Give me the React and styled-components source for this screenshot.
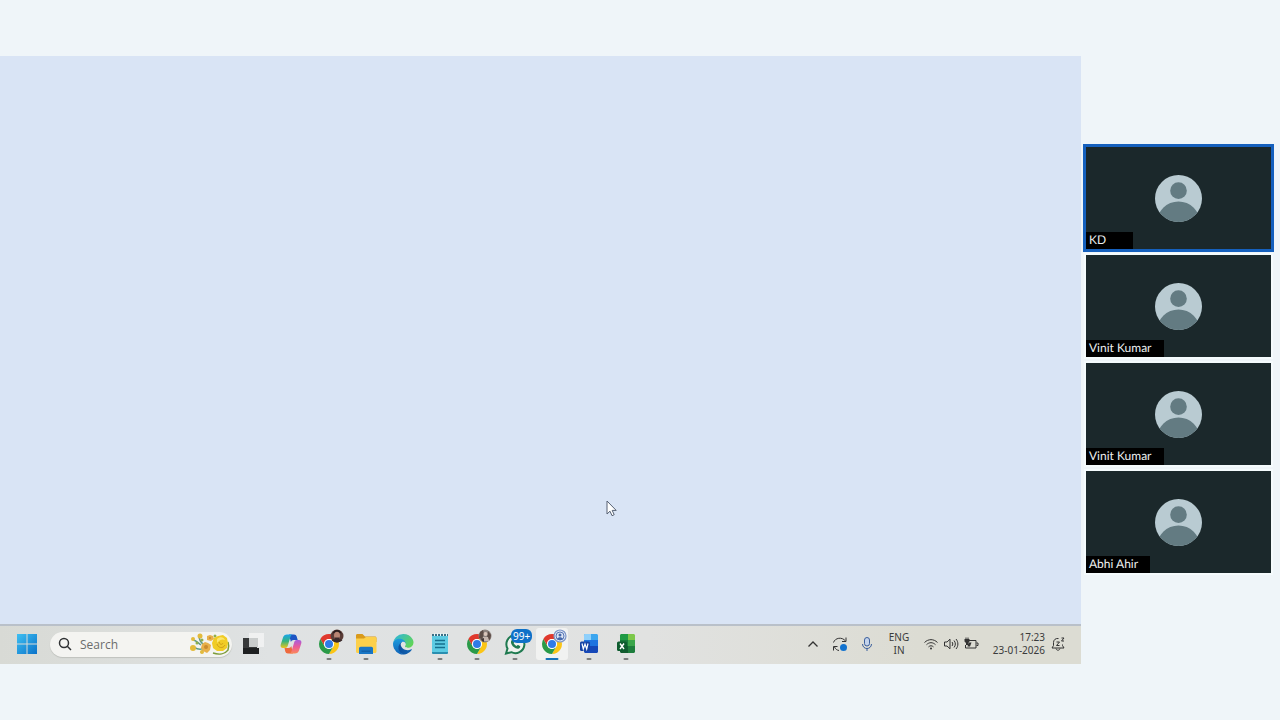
import React from 'react';
import styled, {createGlobalStyle} from 'styled-components';


const people = [
    {id: 1, name: 'KD', speaking: true},
    {id: 2, name: 'Vinit Kumar'},
    {id: 3, name: 'Vinit Kumar'},
    {id: 4, name: 'Abhi Ahir'},
];

const GlobalStyle = createGlobalStyle`
    * {
        box-sizing: border-box;
    }
    body {
        margin: 0;
        background-color: #eff5f9;
        font-family: "Noto Sans", "Open Sans", sans-serif;
    }
    button {
        border: none;
        padding: 0;
        background: none;
        font-family: inherit;
        color: inherit;
        cursor: pointer;
    }
`

const Container = styled.div`
    display: flex;
    align-items: center;
    min-height: 100vh;
`
const Screen = styled.main`
    display: flex;
    flex-direction: column;
    flex: 1;
    min-width: 0;
    aspect-ratio: 16 / 9;
    background-color: #d9e4f5;
`
const Desktop = styled.div`
    position: relative;
    flex: 1;
`
const Cursor = styled.svg`
    position: absolute;
    left: 56%;
    top: 78%;
    width: 14px;
    height: 20px;
`
const Bar = styled.footer`
    display: flex;
    align-items: center;
    height: 40px;
    padding: 0 15px 0 9px;
    color: #3a3b3b;
    background: linear-gradient(to right, #d8dad5, #dfe2e3 25%, #e1e2e1 60%, #dcdcd3 85%);
    box-shadow: inset 0 2px 0 #b9c0c9;
`
const Icon = styled.svg`
    display: block;
    flex: none;
    width: 32px;
    height: 32px;
    border-radius: 3px;
`
const StartButton = styled.button`
    display: flex;
    justify-content: center;
    width: 36px;
`
const SearchBox = styled.div`
    display: flex;
    align-items: center;
    width: 182px;
    height: 25px;
    margin: 0 2px 0 5px;
    padding: 0 1px 0 7px;
    border-radius: 13px;
    background-color: #f4f4f1;
    box-shadow: 0 1px 1px #bfc1bd;
`
const SearchIcon = styled.svg`
    flex: none;
    width: 16px;
    height: 16px;
    fill: none;
    stroke: #303234;
    stroke-width: 1.5;
`
const SearchInput = styled.input`
    flex: 1;
    min-width: 0;
    padding: 0 0 0 7px;
    border: none;
    outline: none;
    background: none;
    font-family: "Open Sans", "Noto Sans", sans-serif;
    font-size: 12px;
    &::placeholder{
        color: #6b6c6c;
        opacity: 1;
    }
`
const Flowers = styled.svg`
    flex: none;
    width: 42px;
    height: 24px;
`
const AppButton = styled.button`
    position: relative;
    display: flex;
    justify-content: center;
    width: ${({$wide}) => $wide ? '38px' : '37px'};
    ${Icon}{
        background-color: ${({$active}) => $active ? '#f1f2f1' : 'transparent'};
    }
    &::after{
        content: "";
        display: ${({$open}) => $open ? 'block' : 'none'};
        position: absolute;
        bottom: 0;
        left: 50%;
        transform: translateX(-50%);
        width: ${({$active}) => $active ? '13px' : '5px'};
        height: 2px;
        border-radius: 1px;
        background-color: ${({$active}) => $active ? '#1673b8' : '#7b7d7d'};
    }
`
const Count = styled.span`
    position: absolute;
    top: 1px;
    left: 15px;
    padding: 0 2px;
    border-radius: 6px;
    background-color: #0f71c8;
    color: #fff;
    font-size: 10px;
    line-height: 14px;
`
const Tray = styled.div`
    display: flex;
    align-items: center;
    margin-left: auto;
`
const TrayIcon = styled.svg`
    flex: none;
    width: 16px;
    height: 16px;
    fill: none;
    stroke: ${({$color}) => $color || '#333'};
    stroke-width: 1;
`
const TrayButton = styled.button`
    display: flex;
    justify-content: center;
    width: 27px;
`
const LangButton = styled.button`
    display: flex;
    flex-direction: column;
    align-items: center;
    width: 36px;
    margin: 0 4px 0 1px;
    font-size: 10px;
    line-height: 13px;
`
const StatusButton = styled.button`
    display: flex;
    gap: 4px;
    padding: 0 2px;
`
const ClockButton = styled.button`
    display: flex;
    flex-direction: column;
    align-items: flex-end;
    width: 64px;
    font-size: 10px;
    line-height: 13px;
`
const BellButton = styled.button`
    display: flex;
    margin-left: 5px;
`
const People = styled.aside`
    display: flex;
    flex-direction: column;
    gap: 6px;
    width: 199px;
    padding: 0 9px 0 5px;
`
const TileBox = styled.div`
    position: relative;
    display: flex;
    align-items: center;
    justify-content: center;
    height: 102px;
    background-color: #1b282b;
    box-shadow: 0 0 0 ${({$speaking}) => $speaking ? '3px #1560bd' : '2px #f5fbfd'};
    z-index: ${({$speaking}) => $speaking ? 1 : 0};
`
const Avatar = styled.svg`
    width: 47px;
    height: 47px;
`
const Name = styled.span`
    position: absolute;
    left: 0;
    bottom: 0;
    min-width: 47px;
    padding: 0 12px 1px 3px;
    background-color: #000;
    color: #eef0f0;
    font-family: Lato, "Noto Sans", sans-serif;
    font-size: 12px;
    line-height: 16px;
    text-rendering: geometricPrecision;
`

// every app icon is drawn on a 32x32 board with its centre at 16,16
const StartIcon = () => (
    <Icon viewBox="0 0 32 32">
        <defs>
            <linearGradient id="win" x1="0" y1="0" x2="1" y2="1">
                <stop offset="0" stopColor="#3fc0f2"/>
                <stop offset="1" stopColor="#0a72c9"/>
            </linearGradient>
        </defs>
        <path fill="url(#win)" d="M6 6h9.500v9.500H6zM16.500 6H26v9.500h-9.500zM6 16.500h9.500V26H6zM16.500 16.500H26V26h-9.500z"/>
    </Icon>
);

const FlowersIcon = () => (
    <Flowers viewBox="0 0 42 24">
        <g fill="none" stroke="#5f9a86" strokeWidth="1.5">
            <path d="M5 15c4 3 9 3 13-1M10 5c1 5 4 8 8 10M4 8c3 0 5 3 8 5M12 21c2-3 3-5 6-6"/>
            <path d="M24 21c6 2 12 1 15-3 1-3 1-5 0-8" stroke="#7d9c3a"/>
        </g>
        <g fill="#e3bb3c">
            <circle cx="4" cy="7" r="2"/>
            <circle cx="11" cy="4" r="2.5"/>
            <circle cx="4" cy="16" r="3"/>
            <circle cx="13" cy="20" r="2"/>
        </g>
        <g fill="#8fae4b">
            <circle cx="8" cy="11" r="1.5"/>
            <circle cx="13" cy="8" r="1.5"/>
            <circle cx="26" cy="4" r="1.5"/>
        </g>
        <path fill="#e8b04a" d="M18 4l3-1 3 1 1 3-3 2-4-1zM13 12l3-2 3 1 3 2-1 5-3 3-4-2-2-3z"/>
        <circle cx="17" cy="15" r="2" fill="#c98a2d"/>
        <circle cx="21" cy="6" r="1" fill="#c98a2d"/>
        <path fill="#f0cc25" d="M25 6l4-2 5-1 4 3 1 5-1 5-4 3-6 0-4-3-1-5z"/>
        <path fill="#fbe670" d="M28 7c3-3 7-2 8 1-2-1-5-1-8 3z"/>
        <path fill="none" stroke="#cf9f18" d="M28 12c1 4 6 5 8 1M30 10c1 3 3 3 4 1"/>
    </Flowers>
);

const TaskViewIcon = () => (
    <Icon viewBox="0 0 32 32">
        <path fill="#37393a" d="M6 10h14v16H6z"/>
        <path fill="#1e2021" d="M6 20h16v6H6z"/>
        <path fill="#f2f3f3" fillOpacity=".9" d="M12 5h15v14H12z"/>
        <path fill="#c9cccc" d="M12 10h9v9h-9z"/>
    </Icon>
);

const CopilotIcon = () => (
    <Icon viewBox="0 0 32 32">
        <defs>
            <linearGradient id="copA" x1="0" y1="0" x2="0" y2="1">
                <stop offset="0" stopColor="#19a5ea"/>
                <stop offset=".5" stopColor="#35b47d"/>
                <stop offset="1" stopColor="#f1c51b"/>
            </linearGradient>
            <linearGradient id="copB" x1="0" y1="0" x2="0" y2="1">
                <stop offset="0" stopColor="#a45de0"/>
                <stop offset=".5" stopColor="#ea5a9a"/>
                <stop offset="1" stopColor="#fb8a5a"/>
            </linearGradient>
        </defs>
        <path fill="#1c55c4" d="M14 6.500h5c1.500 0 2.300.8 2.700 2l1 3.500h-4c-1.500 0-2.400.7-2.800 2z"/>
        <path fill="#ee6a3e" d="M18 25.500h-5c-1.500 0-2.300-.8-2.700-2L9.500 20h4c1.500 0 2.400-.7 2.800-2z"/>
        <path fill="url(#copA)" d="M12 6.500h6c-1.500.2-2.200 1.200-2.600 2.600l-2.700 9c-.4 1.300-1.200 2-2.600 2H8c-2 0-2.800-1.500-2.300-3.300l2.300-7.300c.6-2 2-3 4-3z"/>
        <path fill="url(#copB)" d="M20 25.500h-6c1.500-.2 2.200-1.200 2.600-2.600l2.700-9c.4-1.300 1.200-2 2.600-2H24c2 0 2.800 1.500 2.300 3.300L24 22.500c-.6 2-2 3-4 3z"/>
    </Icon>
);

const ChromeIcon = ({children}) => (
    <Icon viewBox="0 0 32 32">
        <g transform="translate(16 16)">
            <path fill="#e0392d" d="M-8.660-5A10 10 0 0 1 8.660-5H0A5 5 0 0 0-4.330 2.500Z"/>
            <path fill="#fbc516" transform="rotate(120)" d="M-8.660-5A10 10 0 0 1 8.660-5H0A5 5 0 0 0-4.330 2.500Z"/>
            <path fill="#2a9a48" transform="rotate(240)" d="M-8.660-5A10 10 0 0 1 8.660-5H0A5 5 0 0 0-4.330 2.500Z"/>
            <circle r="5" fill="#fff"/>
            <circle r="4" fill="#2f7be6"/>
        </g>
        {children}
    </Icon>
);

const ManBadge = () => (
    <g>
        <circle cx="24" cy="8" r="6.5" fill="#5b3d38"/>
        <path fill="#2a1d1d" d="M19.500 7c0-3.500 2-5 4.500-5s4.500 1.500 4.500 5l-1-2h-7z"/>
        <ellipse cx="24" cy="7.5" rx="3" ry="3.8" fill="#b98573"/>
        <path fill="#3a2a2c" d="M21.500 9.500h5l-1 2.500h-3zM18.500 12c2-1.500 9-1.500 11 0-2.500 3.300-8.500 3.300-11 0z"/>
    </g>
);

const PhotoBadge = () => (
    <g>
        <circle cx="24" cy="8" r="6.5" fill="#8d837f"/>
        <path fill="#5c4c46" d="M19 4l3-2 1 4-2 5-3-1zM27 3l3 4-1 5-3-2z"/>
        <circle cx="24.5" cy="6" r="2" fill="#d9c5ba"/>
        <path fill="#c6b6ae" d="M22 9h5l1 4h-6z"/>
        <path fill="#433836" d="M20 11l3-1v4l-2-1z"/>
    </g>
);

const ProfileBadge = () => (
    <g>
        <circle cx="24" cy="8" r="6" fill="#dbe4f4" stroke="#7c95c8" strokeWidth="1.2"/>
        <circle cx="24" cy="8" r="4" fill="none" stroke="#5877b6"/>
        <circle cx="24" cy="7" r="1.5" fill="#4668ab"/>
        <path fill="#4668ab" d="M21 11c1-2.500 5-2.500 6 0-1.500 1.300-4.500 1.300-6 0z"/>
    </g>
);

const FolderIcon = () => (
    <Icon viewBox="0 0 32 32">
        <path fill="#d99a1c" d="M6 7.500C6 6.700 6.500 6 7.500 6h5l2.500 2.500h10c.8 0 1.500.6 1.500 1.500v4H6z"/>
        <path fill="#fcd04b" d="M6 10.500h8l2-1.500h9c.8 0 1.500.6 1.500 1.500v13c0 .8-.7 1.500-1.500 1.500H7.500c-.8 0-1.500-.7-1.500-1.500z"/>
        <path fill="#1976c5" d="M9 26v-5.500c0-1 .7-1.700 1.700-1.700h10.600c1 0 1.700.7 1.700 1.700V26z"/>
        <path fill="#1461a8" d="M11.500 22.500h9V24h-9z"/>
    </Icon>
);

const EdgeIcon = () => (
    <Icon viewBox="0 0 32 32">
        <defs>
            <linearGradient id="edgeA" x1="0" y1="0" x2="1" y2="0">
                <stop offset="0" stopColor="#0c4f9d"/>
                <stop offset="1" stopColor="#1366b4"/>
            </linearGradient>
            <linearGradient id="edgeB" x1="0" y1="0" x2="0" y2="1">
                <stop offset="0" stopColor="#1f9fe0"/>
                <stop offset="1" stopColor="#0f63b8"/>
            </linearGradient>
            <linearGradient id="edgeC" x1="0" y1="0" x2="1" y2=".6">
                <stop offset="0" stopColor="#2bb3e6"/>
                <stop offset="1" stopColor="#5fd45a"/>
            </linearGradient>
        </defs>
        <g transform="translate(6 6) scale(.08)">
            <path fill="url(#edgeA)" d="M231 190.500c-3.400 1.800-6.900 3.400-10.500 4.700a101.800 101.800 0 0 1-35.900 6.400c-47.300 0-88.500-32.500-88.500-74.300a31.500 31.500 0 0 1 16.400-27.300c-42.800 1.800-53.800 46.400-53.800 72.500 0 74 68.100 81.400 82.800 81.400 7.900 0 19.800-2.300 27-4.600l1.300-.4a128.300 128.300 0 0 0 66.600-52.800 4 4 0 0 0-5.400-5.600z"/>
            <path fill="url(#edgeB)" d="M105.700 241.400a79.200 79.200 0 0 1-22.700-21.300 80.700 80.700 0 0 1 29.500-120c3.200-1.500 8.500-4.200 15.600-4.100a32.400 32.400 0 0 1 25.700 13 31.900 31.900 0 0 1 6.300 18.700c0-.2 24.500-79.600-80-79.600-43.900 0-80 41.700-80 78.200a130.200 130.200 0 0 0 12.100 56 128 128 0 0 0 156.400 67.100 75.500 75.500 0 0 1-62.800-8z"/>
            <path fill="url(#edgeC)" d="M152.300 148.900c-.9 1-3.400 2.500-3.400 5.600 0 2.600 1.700 5.200 4.800 7.300 14.400 10.100 41.700 8.700 41.800 8.700 10.700 0 21.200-2.900 30.500-8.300A61.800 61.800 0 0 0 256.400 109c.3-22.400-8-37.300-11.300-43.900C223.900 23.500 177.700 0 128 0A128 128 0 0 0 0 126.200C.5 89.700 36.800 60.200 80 60.200c3.500 0 23.500.3 42 10.100a72.600 72.600 0 0 1 30.900 29.300c6.100 10.600 7.200 24.100 7.200 29.500 0 5.300-2.700 13.300-7.800 19.900z"/>
        </g>
    </Icon>
);

const NotepadIcon = () => (
    <Icon viewBox="0 0 32 32">
        <path fill="#5ccbe3" d="M8 7h16v17c0 1-.6 1.500-1.500 1.500h-13c-1 0-1.500-.5-1.500-1.500z"/>
        <path fill="#2a8fb0" d="M8 24h16v.5c0 1-.6 1.500-1.500 1.500h-13C8.500 26 8 25.500 8 24.500z"/>
        <path fill="#3a6f86" d="M8 6h16v2H8z"/>
        <path stroke="#e6f4f7" strokeWidth="1" d="M10.500 5v3M13.500 5v3M16.500 5v3M19.500 5v3M22.500 5v3"/>
        <path stroke="#15708f" strokeWidth="1.3" d="M11 12.500h10M11 16h10M11 19.500h10"/>
    </Icon>
);

const WhatsappIcon = () => (
    <Icon viewBox="0 0 32 32">
        <path fill="#eef2ee" stroke="#1f7a50" strokeWidth="2" d="M7 25.500l1.500-5a9 9 0 1 1 3.800 3.700z"/>
        <path fill="#1f7a50" d="M13.300 11.500c.5-.4 1-.3 1.300.3l.8 1.800c.2.500-.5 1.100-.8 1.500.7 1.400 1.700 2.300 3.100 3 .5-.5.9-1.200 1.400-1l1.800.9c.5.300.4 1 .1 1.500-1 1.500-2.600 1.500-4.300.8-2.300-1-3.900-2.800-4.600-5-.4-1.600.2-3.100 1.200-3.800z"/>
    </Icon>
);

const WordIcon = () => (
    <Icon viewBox="0 0 32 32">
        <path fill="#3ca6ef" d="M11 7.500c0-.8.6-1.500 1.500-1.500h11c.8 0 1.500.6 1.500 1.500V13H11z"/>
        <path fill="#8fd0fb" d="M11 7.500c0-.8.6-1.500 1.500-1.500H18v6h-7z"/>
        <path fill="#1f74e0" d="M11 12h14v7H11z"/>
        <path fill="#1648b8" d="M11 18h14v5.500c0 .8-.6 1.500-1.500 1.500h-11c-.8 0-1.500-.6-1.500-1.500z"/>
        <rect x="7" y="13.500" width="10" height="9.500" rx="1.500" fill="#1743a6"/>
        <path fill="none" stroke="#fff" strokeWidth="1.2" d="M9 15.500l1.300 5.500 1.700-5 1.700 5 1.300-5.500"/>
    </Icon>
);

const ExcelIcon = () => (
    <Icon viewBox="0 0 32 32">
        <path fill="#1f9a45" d="M10 7.500c0-.8.6-1.500 1.500-1.500H18v7h-8z"/>
        <path fill="#7cc84a" d="M18 6h5.500c.8 0 1.500.6 1.500 1.500V13h-7z"/>
        <path fill="#167a3a" d="M10 12h8v7h-8z"/>
        <path fill="#3aa54a" d="M18 12h7v7h-7z"/>
        <path fill="#135c30" d="M10 18h8v7h-6.500c-.8 0-1.500-.6-1.500-1.500z"/>
        <path fill="#1d7d3c" d="M18 18h7v5.500c0 .8-.6 1.500-1.500 1.500H18z"/>
        <rect x="7" y="13.500" width="10" height="9.500" rx="1.500" fill="#0e5c2f"/>
        <path fill="none" stroke="#fff" strokeWidth="1.4" d="M10 15.500l4 5.500M14 15.500L10 21"/>
    </Icon>
);

const apps = [
    {name: 'Task view', icon: <TaskViewIcon/>, wide: true},
    {name: 'Copilot', icon: <CopilotIcon/>, wide: true},
    {name: 'Chrome', icon: <ChromeIcon><ManBadge/></ChromeIcon>, open: true},
    {name: 'File Explorer', icon: <FolderIcon/>, open: true},
    {name: 'Edge', icon: <EdgeIcon/>},
    {name: 'Notepad', icon: <NotepadIcon/>, open: true},
    {name: 'Chrome, second profile', icon: <ChromeIcon><PhotoBadge/></ChromeIcon>, open: true, wide: true},
    {name: 'WhatsApp', icon: <WhatsappIcon/>, open: true, count: '99+'},
    {name: 'Chrome, work profile', icon: <ChromeIcon><ProfileBadge/></ChromeIcon>, open: true, active: true},
    {name: 'Word', icon: <WordIcon/>, open: true},
    {name: 'Excel', icon: <ExcelIcon/>, open: true},
];

const Taskbar = () => (
    <Bar>
        <StartButton aria-label="Start"><StartIcon/></StartButton>
        <SearchBox>
            <SearchIcon viewBox="0 0 16 16">
                <circle cx="7" cy="7" r="4.5"/>
                <path d="M10.300 10.300L14 14"/>
            </SearchIcon>
            <SearchInput type="text" placeholder="Search" aria-label="Search"/>
            <FlowersIcon/>
        </SearchBox>
        {apps.map((app) => (
            <AppButton key={app.name} aria-label={app.name} $wide={app.wide} $open={app.open} $active={app.active}>
                {app.icon}
                {app.count ? <Count>{app.count}</Count> : null}
            </AppButton>
        ))}
        <Tray>
            <TrayButton aria-label="Hidden icons">
                <TrayIcon viewBox="0 0 16 16"><path strokeWidth="1.3" d="M3.500 10.500L8 6l4.500 4.500"/></TrayIcon>
            </TrayButton>
            <TrayButton aria-label="Updates">
                <TrayIcon viewBox="0 0 16 16">
                    <path d="M1.500 6.500C3 1.800 10 .5 13.500 5M14 1.500V5.500h-4M7 14.500c-2-.3-3.500-1.300-4.500-3.500M1.500 14.500v-4h4"/>
                    <circle cx="11.5" cy="11.5" r="3.5" fill="#1273cf" stroke="none"/>
                </TrayIcon>
            </TrayButton>
            <TrayButton aria-label="Microphone">
                <TrayIcon viewBox="0 0 16 16" $color="#3b5f9c">
                    <rect x="5.5" y="1.5" width="5" height="8.5" rx="2.5" fill="#c3d3ec"/>
                    <path d="M3.500 8c.2 6 8.800 6 9 0M8 12.500v2.500"/>
                </TrayIcon>
            </TrayButton>
            <LangButton>
                <span>ENG</span>
                <span>IN</span>
            </LangButton>
            <StatusButton aria-label="Network, volume and battery">
                <TrayIcon viewBox="0 0 16 16">
                    <path d="M1.500 6.500c3.800-3.800 9.200-3.800 13 0M3.500 8.700c2.700-2.700 6.300-2.700 9 0M5.500 10.900c1.600-1.500 3.400-1.500 5 0"/>
                    <circle cx="8" cy="12.5" r="1" fill="#333" stroke="none"/>
                </TrayIcon>
                <TrayIcon viewBox="0 0 16 16">
                    <path d="M1.500 6h2.500l3-2.800v9.600L4 10H1.500zM9 6c1 1.200 1 2.800 0 4M11 4.500c1.800 2 1.800 5 0 7M13 3c2.500 3 2.500 7 0 10"/>
                </TrayIcon>
                <TrayIcon viewBox="0 0 16 16">
                    <path d="M6 4.500h7v7.500H2.500V9M13.500 7h1.500v2.500h-1.500"/>
                    <path fill="#333" stroke="none" d="M1.500 3h1V1.500h1V3h1V1.500h1V3h1v2.500L5 7v2H3V7L1.500 5.500zM5.500 6.500H8.500l-1.500 4H4.500z"/>
                </TrayIcon>
            </StatusButton>
            <ClockButton>
                <span>17:23</span>
                <span>23-01-2026</span>
            </ClockButton>
            <BellButton aria-label="Notifications">
                <TrayIcon viewBox="0 0 16 16">
                    <path d="M8.500 2.500C5.500 2 3.500 4 3.500 6.500v3L2 12h12l-1.500-2.500V8.500M6 12.500c.5 2.300 3.500 2.300 4 0M6.500 6h3l-3 3.500h3M11.500 2H14l-2.500 3H14"/>
                </TrayIcon>
            </BellButton>
        </Tray>
    </Bar>
);

const Tile = ({name, speaking}) => (
    <TileBox $speaking={speaking}>
        <Avatar viewBox="0 0 48 48">
            <defs>
                <clipPath id="face"><circle cx="24" cy="24" r="24"/></clipPath>
            </defs>
            <g clipPath="url(#face)">
                <path fill="#b9cbd2" d="M0 0h48v48H0z"/>
                <circle cx="24" cy="16" r="8.5" fill="#637b82"/>
                <circle cx="24" cy="49" r="22" fill="#637b82"/>
            </g>
        </Avatar>
        <Name>{name}</Name>
    </TileBox>
);

const App = () => {
    return (
        <>
            <GlobalStyle/>
            <Container>
                <Screen>
                    <Desktop>
                        <Cursor viewBox="-1 -1 14 20">
                            <path fill="#fff" stroke="#566173" strokeWidth="1" d="M1 1v13l3-2.800 2 4.500 2.200-1-2-4.300h4z"/>
                        </Cursor>
                    </Desktop>
                    <Taskbar/>
                </Screen>
                <People>
                    {people.map((person) => (
                        <Tile key={person.id} name={person.name} speaking={person.speaking}/>
                    ))}
                </People>
            </Container>
        </>
    );
};

export default App;
